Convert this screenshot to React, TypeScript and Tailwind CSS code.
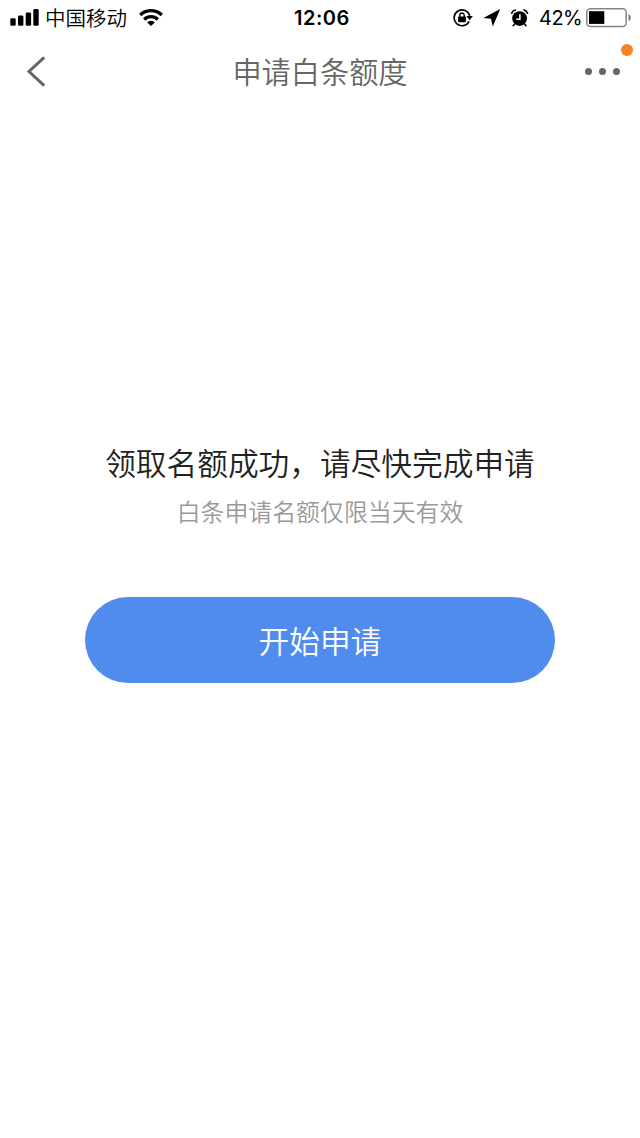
function StatusBar() {
  return (
    <div className="flex h-9 w-full shrink-0 items-center pl-[10px] text-black">
      <svg className="h-[18px] w-[30px] shrink-0" viewBox="0 0 30 18" fill="currentColor">
        <rect x="0.3" y="9.2" width="5.4" height="7.6" rx="1.4" />
        <rect x="8" y="6.6" width="5.4" height="10.2" rx="1.4" />
        <rect x="15.7" y="3.4" width="5.4" height="13.4" rx="1.4" />
        <rect x="23.3" y="0" width="5.4" height="16.8" rx="1.4" />
      </svg>
      <span className="ml-[5px] w-[83px] whitespace-nowrap pb-[2px] text-[20.5px] font-[350] leading-[34px]">中国移动</span>
      <svg className="ml-[11px] h-[18px] w-6 shrink-0" viewBox="0 0 24 18">
        <g fill="none" stroke="currentColor" strokeWidth="3.2">
          <path d="M1.2 6A15.4 15.4 0 0 1 22.8 6" />
          <path d="M5.2 10.5A9.6 9.6 0 0 1 18.8 10.5" />
        </g>
        <path d="M12 17 8.2 13.4A5.4 5.4 0 0 1 15.8 13.4Z" fill="currentColor" />
      </svg>
      <span className="ml-[131px] w-[57px] whitespace-nowrap font-[Inter] text-[20px] font-semibold leading-9 tracking-[0.5px]">12:06</span>
      <svg className="ml-[102px] h-5 w-[20px] shrink-0" viewBox="0 0 20 20">
        <path d="M16.1 13.4A7.9 7.9 0 1 1 16.7 7.9" fill="none" stroke="currentColor" strokeWidth="1.7" />
        <path d="M13.4 8.1H19.8L16.7 12.3Z" fill="currentColor" />
        <rect x="5.1" y="8.5" width="7.8" height="5.7" rx="0.7" fill="currentColor" />
        <path d="M6.8 9V7.2a2.2 2.2 0 0 1 4.4 0V9" fill="none" stroke="currentColor" strokeWidth="1.4" />
      </svg>
      <svg className="ml-[10px] h-[18px] w-[18px] shrink-0" viewBox="0 0 18 18" fill="currentColor">
        <path d="M17.2 0 0.4 8.9 8 9.8 9.8 17.4Z" />
      </svg>
      <svg className="ml-[9px] h-[19px] w-[20px] shrink-0" viewBox="0 0 20 19">
        <circle cx="9.6" cy="9.6" r="7.4" fill="currentColor" />
        <path d="M1.7 4.3Q2.5 1.6 5.3 1M17.5 4.3Q16.7 1.6 13.9 1M4.4 15.3 3.2 16.7M14.8 15.3 16 16.7" fill="none" stroke="currentColor" strokeWidth="1.6" strokeLinecap="round" />
        <path d="M9.9 5.3V10.2H6.3" fill="none" stroke="white" strokeWidth="1.5" />
      </svg>
      <span className="ml-[9px] w-[42px] whitespace-nowrap font-[Inter] text-[20px] leading-9 tracking-[-0.5px]">42%</span>
      <svg className="ml-[5px] h-5 w-[46px] shrink-0" viewBox="0 0 46 20">
        <rect x="0.8" y="0.8" width="39.4" height="17.6" rx="3.6" fill="white" stroke="#858585" strokeWidth="1.5" />
        <rect x="3" y="3.2" width="15.3" height="12.7" fill="black" />
        <path d="M42.5 6.3Q44.9 7.1 44.9 9.6T42.5 12.9Z" fill="#777777" />
      </svg>
    </div>
  );
}

function NavBar() {
  return (
    <header className="relative flex h-[68px] shrink-0 items-center justify-between pl-[26px] pr-5 text-[#666666]">
      <button aria-label="返回" className="flex h-8 w-[35px] items-center pt-[2px]">
        <svg className="h-8 w-5 shrink-0" viewBox="0 0 20 32" fill="none" stroke="currentColor" strokeWidth="3">
          <path d="M18.2 2.3 3 16.5 18.2 30.7" />
        </svg>
      </button>
      <h1 className="mr-[6px] whitespace-nowrap text-[29.2px] font-[350] leading-[68px]">申请白条额度</h1>
      <button aria-label="更多" className="flex items-center gap-[7px] pt-[3px]">
        <span className="size-[7px] rounded-full bg-[#666666]" />
        <span className="size-[7px] rounded-full bg-[#666666]" />
        <span className="size-[7px] rounded-full bg-[#666666]" />
      </button>
      <span className="absolute right-[7px] top-2 size-3 rounded-full bg-[#fa8220]" />
    </header>
  );
}

export default function App() {
  return (
    <div className="flex h-[1138px] w-[640px] flex-col bg-white font-['Noto_Sans_CJK_SC',sans-serif]">
      <StatusBar />
      <NavBar />
      <main className="flex flex-col items-center pt-[334px]">
        <h2 className="whitespace-nowrap text-[30.7px] font-[350] leading-[48px] text-[#222222]">领取名额成功，请尽快完成申请</h2>
        <p className="whitespace-nowrap pt-[7px] text-[23.9px] font-[350] leading-[36px] text-[#999999]">白条申请名额仅限当天有效</p>
        <button className="mt-[68px] flex h-[85.5px] w-[470px] items-center justify-center rounded-full bg-[#508cee] text-[30.7px] font-[350] leading-[48px] text-white">
          开始申请
        </button>
      </main>
    </div>
  );
}
